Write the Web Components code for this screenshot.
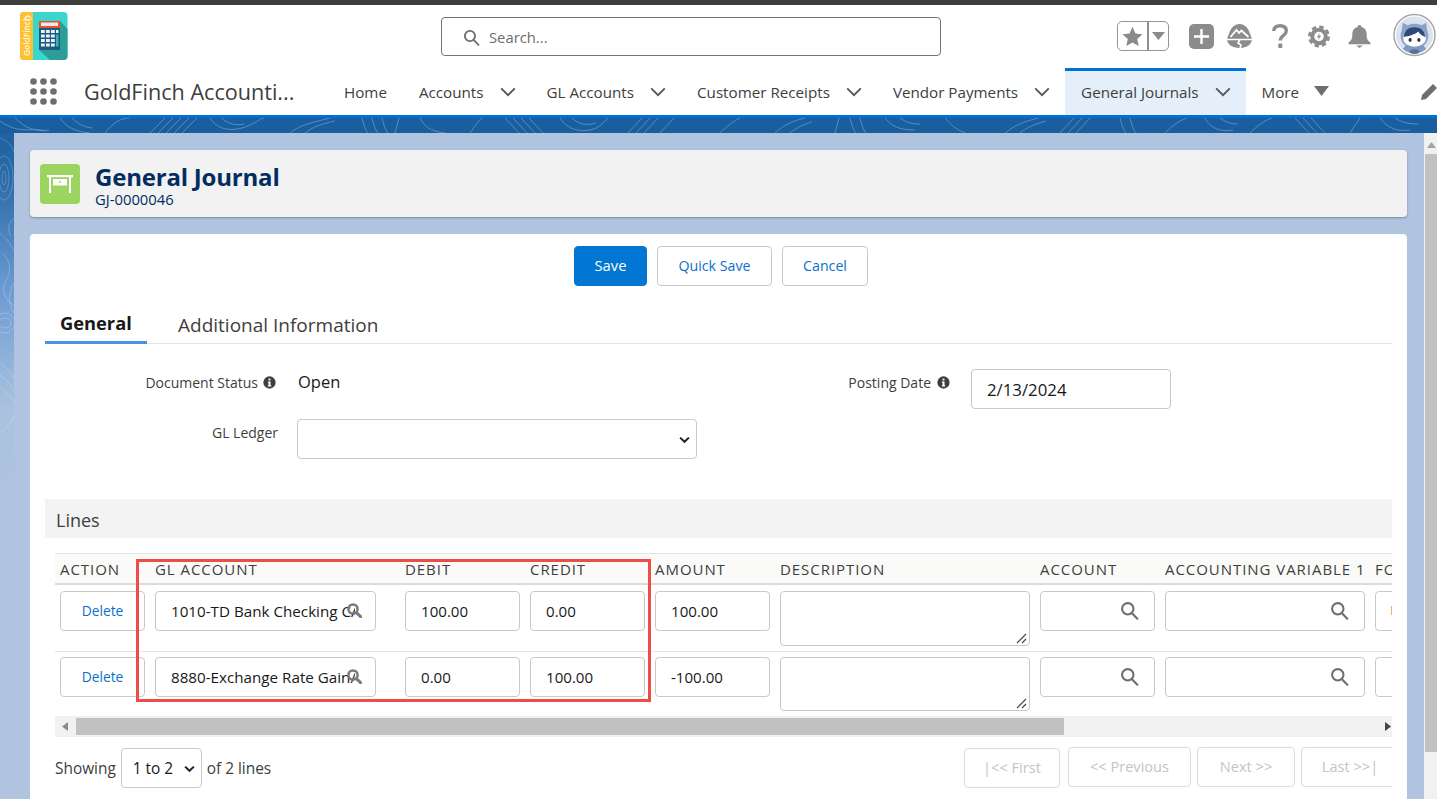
<!DOCTYPE html>
<html>
<head>
<meta charset="utf-8">
<title>General Journal</title>
<style>
  html, body { margin: 0; height: 799px; overflow: hidden; }
  body { font-family: "Open Sans", "Liberation Sans", sans-serif; color: #181818; background: #fff; }
</style>
</head>
<body>
<app-shell>
  <app-header></app-header>
  <app-nav>
    <nav-tab>Home</nav-tab>
    <nav-tab menu>Accounts</nav-tab>
    <nav-tab menu>GL Accounts</nav-tab>
    <nav-tab menu>Customer Receipts</nav-tab>
    <nav-tab menu>Vendor Payments</nav-tab>
    <nav-tab menu active>General Journals</nav-tab>
    <nav-tab more>More</nav-tab>
  </app-nav>
  <page-body>
    <record-head title="General Journal" sub="GJ-0000046"></record-head>
    <journal-panel></journal-panel>
  </page-body>
</app-shell>

<script>
(function(customElements) {
  'use strict';

  const MAGNIFIER = `<svg viewBox="0 0 20 20" width="100%" height="100%" fill="none" stroke="currentColor" stroke-width="2.2"><circle cx="8.2" cy="8.2" r="6"/><path d="M12.6 12.8l5.6 5.8" stroke-linecap="round"/></svg>`;
  const HEAVY_MAGNIFIER = `<svg viewBox="0 0 15 15" width="15" height="15" fill="none" stroke="#7a7a7a"><circle cx="6" cy="6" r="4.6" stroke-width="2.5"/><path d="M9.6 9.8l4 3.8" stroke-width="3" stroke-linecap="round"/></svg>`;
  const CHEVRON = `<svg viewBox="0 0 16 10" width="16" height="10" fill="none" stroke="currentColor" stroke-width="1.9"><path d="M1.2 1.4L8 8.2l6.8-6.8"/></svg>`;
  const SMALL_CHEVRON = `<svg viewBox="0 0 12 8" width="11" height="8" fill="none" stroke="#222" stroke-width="2.2" style="display:block"><path d="M1.2 1.4L6 6l4.8-4.6"/></svg>`;
  const INFO = `<svg viewBox="0 0 14 14" width="13" height="13"><circle cx="7" cy="7" r="6.6" fill="#3e3e3c"/><rect x="6" y="2.8" width="2" height="2" fill="#fff"/><path d="M5.3 6h2.8v4h.8v1.2H5.2V10H6V7.2h-.7z" fill="#fff"/></svg>`;

  function define(name, render) {
    customElements.define(name, class extends HTMLElement {
      constructor() {
        super();
        this.attachShadow({mode: 'open'});
        this.shadowRoot.innerHTML = render(this);
      }
    });
  }

  define('app-shell', () => `
    <style>
      :host { display: flex; flex-direction: column; height: 799px; border-top: 5px solid #3e3e3c; box-sizing: border-box; overflow: hidden; }
    </style>
    <slot></slot>`);

  define('app-header', () => `
    <style>
      :host { display: block; position: relative; height: 63px; background: #fff; }
      .logo { position: absolute; left: 20px; top: 7px; }
      .search { position: absolute; left: 441px; top: 12px; width: 500px; height: 39px; box-sizing: border-box; border: 1px solid #747474; border-radius: 4px; display: flex; align-items: center; color: #706e6b; font-size: 14.8px; }
      .search span { padding-top: 1px; }
      .search i { width: 17px; height: 17px; margin: 2px 9px 0 21px; display: block; color: #706e6b; }
      .actions { position: absolute; left: 1117px; top: 8px; display: flex; align-items: center; }
      .fav { width: 52px; height: 30px; box-sizing: border-box; border: 1px solid #969492; border-radius: 5px; display: flex; }
      .fav span { display: flex; align-items: center; justify-content: center; }
      .fav .s { width: 29px; border-right: 2px solid #8f8f8f; }
      .fav .d { flex: 1; }
      .act { display: block; }
      .avatar { margin: 0 0 2px 22px; display: block; }
    </style>
    <svg class="logo" width="48" height="48" viewBox="0 0 48 48">
      <rect width="47.5" height="48" rx="4" fill="#3ad5cf"/>
      <path d="M13 0V48H4a4 4 0 0 1-4-4V4a4 4 0 0 1 4-4z" fill="#fdc02f"/>
      <text transform="translate(9.5 44) rotate(-90)" font-family="Open Sans, sans-serif" font-size="8.4" font-weight="600" fill="#fff" fill-opacity=".85">GoldFinch</text>
      <path d="M8 3l3.5 3-1 2h-5l-1-2z" fill="none" stroke="#fff" stroke-opacity=".7"/>
      <path d="M40 9l7.5 8V44a4 4 0 0 1-4 4H30L19 38z" fill="#2b9e97"/>
      <rect x="19" y="9" width="21" height="29" rx="1" fill="#1d5a80"/>
      <rect x="19" y="9" width="21" height="7" fill="#f04e23"/>
      <rect x="21" y="10.5" width="17" height="3.5" fill="#e6eef2"/>
      <g fill="#e8f1f4">
        <rect x="21" y="18" width="3.8" height="3"/><rect x="26" y="18" width="3.8" height="3"/><rect x="31" y="18" width="3.8" height="3"/><rect x="36" y="18" width="2.5" height="3"/>
        <rect x="21" y="22.5" width="3.8" height="3"/><rect x="26" y="22.5" width="3.8" height="3"/><rect x="31" y="22.5" width="3.8" height="3"/>
        <rect x="21" y="27" width="3.8" height="3"/><rect x="26" y="27" width="3.8" height="3"/><rect x="31" y="27" width="3.8" height="3"/>
        <rect x="21" y="31.5" width="3.8" height="3"/><rect x="26" y="31.5" width="3.8" height="3"/><rect x="31" y="31.5" width="3.8" height="3"/>
      </g>
      <rect x="36" y="22.5" width="2.5" height="12" fill="#39b6ad"/>
    </svg>
    <div class="search"><i>${MAGNIFIER}</i><span>Search...</span></div>
    <div class="actions">
      <div class="fav">
        <span class="s"><svg width="21" height="21" viewBox="0 0 20 20"><path d="M10 .8l2.8 6.3 6.7.7-5 4.6 1.4 6.7L10 15.6l-5.9 3.5 1.4-6.7-5-4.6 6.7-.7z" fill="#8a8a8a"/></svg></span>
        <span class="d"><svg width="13" height="8" viewBox="0 0 13 8"><path d="M0 0h13L6.5 8z" fill="#8a8a8a"/></svg></span>
      </div>
      <svg class="act" style="margin-left:20px" width="25" height="25" viewBox="0 0 25 25"><rect width="25" height="25" rx="5" fill="#8c8c8c"/><path d="M12.5 5v15M5 12.5h15" stroke="#fff" stroke-width="2.4"/></svg>
      <svg class="act" style="margin-left:13px" width="25" height="24" viewBox="0 0 25 24">
        <path d="M12.5 0C17 0 20 3 22 7l3 8c0 5-5 9-12.5 9S0 20 0 15l3-8C5 3 8 0 12.5 0z" fill="#8c8c8c"/>
        <path d="M3.5 13L9.5 6l2.5 3 2.5-2.5L21.5 13" fill="none" stroke="#fff" stroke-width="1.8"/>
        <path d="M0 15.5h25M13 15.5l-2 3.5 3 2-1 3" fill="none" stroke="#fff" stroke-width="1.6"/>
      </svg>
      <svg class="act" style="margin-left:20px" width="16" height="24" viewBox="0 0 16 24"><path d="M1.8 7C1.8 3.5 4 1.8 8 1.8s6.3 2 6.3 5.2c0 4.5-6 4.5-6 9.5" fill="none" stroke="#8c8c8c" stroke-width="3.4"/><rect x="6.3" y="19.5" width="4" height="4.5" rx="1" fill="#8c8c8c"/></svg>
      <svg class="act" style="margin-left:20px" width="22" height="23" viewBox="0 0 24 24">
        <circle cx="12" cy="12" r="9.5" fill="#8c8c8c"/>
        <circle cx="12" cy="12" r="10.5" fill="none" stroke="#8c8c8c" stroke-width="3" stroke-dasharray="4.8 3.45"/>
        <circle cx="12" cy="12" r="5.2" fill="#fff"/>
        <path d="M13 7.8l-3.4 5h2.2l-.8 3.4 3.4-5h-2.2z" fill="#8c8c8c"/>
      </svg>
      <svg class="act" style="margin-left:18px" width="23" height="24" viewBox="0 0 24 25"><path d="M12 1c1.5 0 2 1 2 2 4 1 5.500 4 5.500 8 0 5 1 6 4 8.500V21H.5v-1.500C3.500 17 4.500 16 4.500 11c0-4 1.500-7 5.500-8 0-1 .5-2 2-2z" fill="#8c8c8c"/><path d="M8.500 22.500h7L12 25z" fill="#8c8c8c"/></svg>
      <svg class="avatar" width="43" height="44" viewBox="0 0 44 44">
        <circle cx="22" cy="22" r="21" fill="#fff" stroke="#a5a5a5" stroke-width="1.5"/>
        <circle cx="22" cy="22" r="19" fill="#dbe3f0"/>
        <path d="M10 9.500l5 2.500c5-2 9-2 14 0l5-2.500 1 8c2 4 1.500 9-1 13-3 3.500-7 5-12 5s-9-1.500-12-5c-2.500-4-3-9-1-13z" fill="#8ca3c8"/>
        <path d="M10 36c3-4 7-6 12-6s9 2 12 6c-3 3-8 5-12 5s-9-2-12-5z" fill="#8299c0"/>
        <ellipse cx="22" cy="25.5" rx="11.5" ry="8.5" fill="#fff"/>
        <path d="M11 24c1-7 5-10 11-10s10 3 11 10c-3-1-6-3-7-5.500-3 3-10 5-15 5.500z" fill="#2f4a78"/>
        <ellipse cx="17.5" cy="27" rx="1.6" ry="2" fill="#1b2c4d"/><ellipse cx="26.5" cy="27" rx="1.6" ry="2" fill="#1b2c4d"/>
        <ellipse cx="22" cy="39" rx="5" ry="2.5" fill="#5b7199"/>
      </svg>
    </div>`);

  define('app-nav', () => `
    <style>
      :host { display: flex; height: 50px; box-sizing: border-box; border-bottom: 3px solid #0070d2; background: #fff; position: relative; font-size: 15.2px; color: #3e3e3c; overflow: hidden; }
      .launcher { width: 84px; flex: none; padding: 10px 0 0 30px; box-sizing: border-box; }
      .launcher svg { display: block; }
      .name { width: 244px; flex: none; font-size: 21.6px; line-height: 48px; color: #3e3e3c; white-space: nowrap; }
      .tabs { display: flex; flex: 1; }
      .edit { position: absolute; right: -1px; top: 15px; }
    </style>
    <div class="launcher"><svg width="27" height="27" viewBox="0 0 27 27" fill="#706e6b">
      <circle cx="3.5" cy="3.5" r="3.3"/><circle cx="13.5" cy="3.5" r="3.3"/><circle cx="23.5" cy="3.5" r="3.3"/>
      <circle cx="3.5" cy="13.5" r="3.3"/><circle cx="13.5" cy="13.5" r="3.3"/><circle cx="23.5" cy="13.5" r="3.3"/>
      <circle cx="3.5" cy="23.5" r="3.3"/><circle cx="13.5" cy="23.5" r="3.3"/><circle cx="23.5" cy="23.5" r="3.3"/>
    </svg></div>
    <div class="name">GoldFinch Accounti...</div>
    <div class="tabs"><slot></slot></div>
    <svg class="edit" width="17" height="18" viewBox="0 0 17 18"><path d="M12 1l4 4L5 16l-5 1 1-5z" fill="#706e6b"/></svg>`);

  define('nav-tab', (el) => `
    <style>
      :host { display: flex; align-items: center; height: 47px; box-sizing: border-box; padding: 0 16px; white-space: nowrap; color: #3e3e3c; }
      :host([menu]) { padding-right: 15px; }
      :host([active]) { background: #e5eff9; box-shadow: inset 0 3px 0 #0070d2; }
      svg { margin-left: 16px; display: block; color: #54585c; }
      .tri { margin: -2px 0 0 15px; }
    </style>
    <span><slot></slot></span>
    ${el.hasAttribute('menu') ? CHEVRON : ''}
    ${el.hasAttribute('more') ? '<svg class="tri" width="15" height="10" viewBox="0 0 15 10"><path d="M0 0h15L7.5 10z" fill="#706e6b"/></svg>' : ''}`);

  define('page-body', () => `
    <style>
      :host { display: flex; flex-direction: column; flex: 1; min-height: 0; position: relative; background: linear-gradient(180deg, #1b5e9f 0, #2a6aa8 60px, #6b9ad0 170px, #a9c2df 290px, #b0c4df 400px); }
      .band { height: 15px; background: #1b5e9f; flex: none; overflow: hidden; }
      .band svg { display: block; }
      .row { display: flex; flex: 1; min-height: 0; padding-left: 14px; }
      .main { flex: 1; min-width: 0; background: #b0c4df; padding: 17px 17px 0 16px; display: flex; flex-direction: column; gap: 17px; overflow: hidden; }
      .bar { width: 13px; background: #f1f1f1; flex: none; position: relative; }
      .bar b { display: block; height: 598px; margin: 21px 0 0 1px; background: #c1c1c1; }
      .bar svg { position: absolute; left: 3px; top: 9px; }
      .left { position: absolute; left: 0; top: 15px; width: 14px; bottom: 0; }
    </style>
    <div class="band"><svg width="1437" height="15" fill="none" stroke="#6a9ccb" stroke-opacity=".75" stroke-width="1">
      <path d="M0 3c20 14 30 6 45 10M15 0c10 10 20 14 34 12M60 0c5 8 15 14 30 15M72 0c6 6 12 9 20 10M105 15c8-10 15-15 25-15M150 15l15-15M158 15l15-15M166 15l15-15M174 15l15-15M182 15l15-15M210 0c6 10 18 14 32 10s18-10 22-10M222 0c6 6 14 8 22 6M290 15c10-8 20-10 40-15M305 15c8-6 16-9 30-12M362 0c2 6 2 10 6 15M372 0c2 6 2 10 6 15M382 0c2 6 2 10 6 15M395 15l4-15M420 0c6 12 16 14 26 15M470 15c6-8 8-12 12-15M505 0l14 15M513 0l14 15M521 0l14 15M529 0l14 15M560 0c8 12 20 14 30 12s14-8 18-12M572 0c6 6 14 8 24 5M628 15l14-15M636 15l14-15M644 15l14-15M660 15l14-15M720 15c8-8 14-12 20-15M775 15c6-6 16-12 30-15M790 15c6-5 12-8 22-11M835 15l4-15M850 0c2 6 2 10 6 15M860 0c2 6 2 10 6 15M885 0c6 8 14 12 30 12M900 0c6 4 10 6 20 6M945 0c6 6 8 10 20 15M1005 15c10-8 20-12 34-15M1020 15c6-5 12-8 26-12M1060 15l14-15M1068 15l14-15M1076 15l14-15M1120 0c2 6 2 10 6 15M1130 0c2 6 2 10 6 15M1165 15c8-8 14-12 22-15M1205 0c6 12 18 14 28 12M1220 0c6 4 10 6 18 6M1250 15c8-8 14-12 22-15M1295 0l14 15M1303 0l14 15M1311 0l14 15M1350 15l10-15M1380 0c8 10 16 14 30 12M1395 0c6 4 12 6 24 6"/>
    </svg></div>
    <svg class="left" width="14" height="666" fill="none" stroke="#fff" stroke-opacity=".22">
      <ellipse cx="4" cy="45" rx="9" ry="22"/><ellipse cx="4" cy="45" rx="5" ry="14"/><ellipse cx="4" cy="45" rx="2" ry="7"/>
      <path d="M0 5c8 3 12 8 14 14M0 100c8 6 12 14 14 18M14 85c-6 6-7 12-3 18M2 120c8 6 10 18 4 28s0 20 8 24M14 150c-6 10-6 20 0 30"/>
      <ellipse cx="5" cy="190" rx="6" ry="5"/><ellipse cx="5" cy="190" rx="10" ry="10"/>
      <path d="M0 230c8 6 12 10 14 16M0 242c8 6 12 10 14 16M0 254c8 6 12 10 14 16M0 300c6-6 10-8 14-18"/>
    </svg>
    <div class="row">
      <div class="main"><slot></slot></div>
      <div class="bar"><svg width="9" height="6" viewBox="0 0 9 6"><path d="M0 6h9L4.5 0z" fill="#a3a3a3"/></svg><b></b></div>
    </div>`);

  define('record-head', (el) => `
    <style>
      :host { display: flex; flex: none; align-items: center; height: 67px; box-sizing: border-box; padding: 0 10px; background: #f2f2f2; border-radius: 4px; box-shadow: 0 1px 2px rgba(0,0,0,.3); }
      .ico { width: 40px; height: 40px; border-radius: 4px; background: #9bd45f; display: flex; align-items: center; justify-content: center; margin-right: 15px; flex: none; }
      .ico svg { display: block; }
      .txt { padding-top: 3px; }
      h1 { margin: 0; font-size: 24px; line-height: 28px; font-weight: 700; color: #032d60; letter-spacing: -.2px; }
      p { margin: 0; font-size: 14.8px; line-height: 16px; color: #032d60; }
    </style>
    <div class="ico"><svg width="26" height="24" viewBox="0 0 26 24" fill="#fff"><path d="M0 3h26v2.2H0z"/><path d="M2 5h2v16H2zM22 5h2v16h-2z"/><rect x="6" y="7" width="14" height="6.5"/><circle cx="13" cy="10" r="1" fill="#9bd45f"/></svg></div>
    <div class="txt"><h1>${el.getAttribute('title')}</h1><p>${el.getAttribute('sub')}</p></div>`);

  // shared text box used for inputs, selects and lookups
  define('form-box', (el) => `
    <style>
      :host { display: block; box-sizing: border-box; height: 40px; border: 1px solid #c9c9c9; border-radius: 4px; background: #fff; position: relative; font-size: 15.1px; color: #181818; }
      .v { display: block; margin-left: 15px; line-height: var(--box-lh, 40px); white-space: nowrap; overflow: hidden; height: 38px; }
      .look { position: absolute; right: 15px; top: 9px; width: 19px; height: 19px; color: #706e6b; }
      .dim { position: absolute; right: 13px; top: 10px; width: 15px; height: 15px; }
      .sel { position: absolute; right: 6px; top: 16px; }
      :host([dense]) { font-size: 15.2px; }
      :host([dense]) .v { margin-right: 20px; }
      :host([select]) .v { margin-left: 11px; margin-right: 20px; }
      :host([area]) { height: var(--area-h, 55px); }
      .grip { position: absolute; right: 1px; bottom: 1px; }
      .fringe { position: absolute; left: 15px; top: 14px; width: 1px; height: 9px; background: #e7b27c; }
    </style>
    <span class="v"><slot></slot></span>
    ${el.hasAttribute('look') ? `<i class="look">${MAGNIFIER}</i>` : ''}
    ${el.hasAttribute('dense') ? `<i class="dim">${HEAVY_MAGNIFIER}</i>` : ''}
    ${el.hasAttribute('select') ? `<span class="sel">${SMALL_CHEVRON}</span>` : ''}
    ${el.hasAttribute('fringe') ? '<i class="fringe"></i>' : ''}
    ${el.hasAttribute('area') ? '<svg class="grip" width="12" height="12" viewBox="0 0 12 12" stroke="#444" stroke-width="1.1"><path d="M1 11L10 2M6 11l4-4"/></svg>' : ''}`);

  define('action-btn', () => `
    <style>
      :host { display: inline-flex; align-items: center; justify-content: center; box-sizing: border-box; height: 40px; padding-bottom: 2px; border: 1px solid #c9c9c9; border-radius: 4px; background: #fff; color: #0b6fcc; font-size: 14.2px; white-space: nowrap; }
      :host([primary]) { background: #0176d3; border-color: #0176d3; color: #fff; font-size: 14.8px; }
      :host([off]) { color: #c4c4c4; border-color: #dcdcdc; font-size: 14.6px; flex: none; }
    </style>
    <slot></slot>`);

  define('journal-line', (el) => {
    const cell = (w, inner) => `<div style="width:${w}px">${inner}</div>`;
    return `
    <style>
      :host { display: grid; grid-template-columns: 95px 250px 125px 125px 125px 260px 125px 210px 100px; padding: 6px 0 0 5px; box-sizing: border-box; border-bottom: 1px solid #e5e5e5; width: 1400px; --box-lh: 38px; }
      :host([last]) { border-bottom: 0; padding-top: 5px; --area-h: 54px; }
    </style>
    ${cell(85, '<action-btn style="width:85px;font-size:13.8px">Delete</action-btn>')}
    ${cell(221, `<form-box dense>${el.getAttribute('account')}</form-box>`)}
    ${cell(115, `<form-box>${el.getAttribute('debit')}</form-box>`)}
    ${cell(115, `<form-box>${el.getAttribute('credit')}</form-box>`)}
    ${cell(115, `<form-box>${el.getAttribute('amount')}</form-box>`)}
    ${cell(250, '<form-box area></form-box>')}
    ${cell(115, '<form-box look></form-box>')}
    ${cell(200, '<form-box look></form-box>')}
    ${cell(90, `<form-box ${el.hasAttribute('last') ? '' : 'fringe'}></form-box>`)}`;
  });

  define('journal-panel', () => `
    <style>
      :host { display: block; flex: 1; background: #fff; border-radius: 4px 4px 0 0; padding: 12px 15px 0; position: relative; font-size: 14px; min-height: 0; }
      .btns { display: flex; justify-content: center; gap: 10px; padding-left: 5px; }
      .tabs { display: flex; margin-top: 24px; border-bottom: 1px solid #e5e5e5; height: 33px; }
      .tab { font-size: 19px; color: #3e3e3c; margin-left: 31px; line-height: 30px; }
      .tab.on { font-size: 18.3px; font-weight: 700; color: #181818; margin: 0; padding: 0 15px; width: 102px; box-sizing: border-box; border-bottom: 3px solid #4a90e8; height: 34px; line-height: 25px; }
      form { display: grid; grid-template-columns: 252px 400px 253px 200px; column-gap: 0; row-gap: 10px; margin: 25px 0 0; }
      .lbl { color: #3e3e3c; font-size: 14px; display: flex; justify-content: flex-end; align-items: flex-start; gap: 6px; padding: 4px 19px 0 0; line-height: 20px; }
      .lbl svg { margin-top: 3px; }
      .lbl.two { padding-right: 21px; gap: 5px; }
      .lbl.post { padding-right: 0; }
      .val { font-size: 16.5px; line-height: 26px; margin-left: 1px; }
      .date { grid-column: 4; margin-left: 21px; width: 200px; font-size: 16.8px; }
      .lines { background: #f3f3f3; height: 39px; margin-top: 40px; padding-left: 11px; font-size: 18px; line-height: 43px; color: #3e3e3c; }
      .tbl { margin: 15px 0 0 10px; overflow: hidden; }
      .head { display: grid; grid-template-columns: 95px 250px 125px 125px 125px 260px 125px 210px 100px; padding-left: 5px; height: 32px; line-height: 31px; box-sizing: border-box; background: #fafaf9; border-top: 1px solid #e5e5e5; border-bottom: 2px solid #dddbda; width: 1400px; font-size: 15px; letter-spacing: .95px; color: #3e3e3c; white-space: nowrap; }
      .h-bar { height: 21px; background: #f1f1f1; position: relative; margin-top: 0; }
      .h-bar b { position: absolute; left: 21px; width: 988px; top: 2px; height: 17px; background: #c1c1c1; }
      .h-bar svg { position: absolute; top: 6px; }
      .foot { display: flex; align-items: center; margin: 10px 0 0 10px; color: #3e3e3c; font-size: 15.4px; }
      .foot > span { padding-top: 1px; }
      .foot .gap { flex: 1; }
      .foot .pager { display: flex; align-items: flex-start; gap: 6px; width: 428px; overflow: hidden; flex: none; }
      .foot .pager :first-child { margin: 1px 2px 0 0; }
      .mark { position: absolute; left: 106px; top: 325px; width: 515px; height: 143px; box-sizing: border-box; border: 3px solid #ee4d46; pointer-events: none; }
      .row1 { height: 67px; } .row2 { height: 64px; }
    </style>
    <div class="btns">
      <action-btn primary style="width:73px">Save</action-btn>
      <action-btn style="width:115px">Quick Save</action-btn>
      <action-btn style="width:86px">Cancel</action-btn>
    </div>
    <div class="tabs"><div class="tab on">General</div><div class="tab">Additional Information</div></div>
    <form>
      <div class="lbl two">Document Status ${INFO}</div>
      <div class="val">Open</div>
      <div class="lbl post">Posting Date ${INFO}</div>
      <form-box class="date">2/13/2024</form-box>
      <div class="lbl">GL Ledger</div>
      <form-box select></form-box>
    </form>
    <div class="lines">Lines</div>
    <div class="tbl">
      <div class="head"><span>ACTION</span><span>GL ACCOUNT</span><span>DEBIT</span><span>CREDIT</span><span>AMOUNT</span><span>DESCRIPTION</span><span>ACCOUNT</span><span>ACCOUNTING VARIABLE 1</span><span>FO</span></div>
      <journal-line class="row1" account="1010-TD Bank Checking CAD" debit="100.00" credit="0.00" amount="100.00"></journal-line>
      <journal-line class="row2" last account="8880-Exchange Rate Gain/Loss" debit="0.00" credit="100.00" amount="-100.00"></journal-line>
      <div class="h-bar"><svg style="left:7px" width="6" height="9" viewBox="0 0 6 9"><path d="M6 0v9L0 4.5z" fill="#8a8a8a"/></svg><b></b><svg style="right:1px" width="6" height="9" viewBox="0 0 6 9"><path d="M0 0v9l6-4.5z" fill="#444"/></svg></div>
    </div>
    <div class="foot">
      <span>Showing</span>
      <form-box select style="width:81px;margin:0 5px;font-size:15.4px">1 to 2</form-box>
      <span>of 2 lines</span>
      <span class="gap"></span>
      <div class="pager">
        <action-btn off style="width:96px">|&lt;&lt; First</action-btn>
        <action-btn off style="width:123px">&lt;&lt; Previous</action-btn>
        <action-btn off style="width:98px">Next &gt;&gt;</action-btn>
        <action-btn off style="width:98px">Last &gt;&gt;|</action-btn>
      </div>
    </div>
    <div class="mark"></div>`);

})(window.customElements);
</script>
</body>
</html>
